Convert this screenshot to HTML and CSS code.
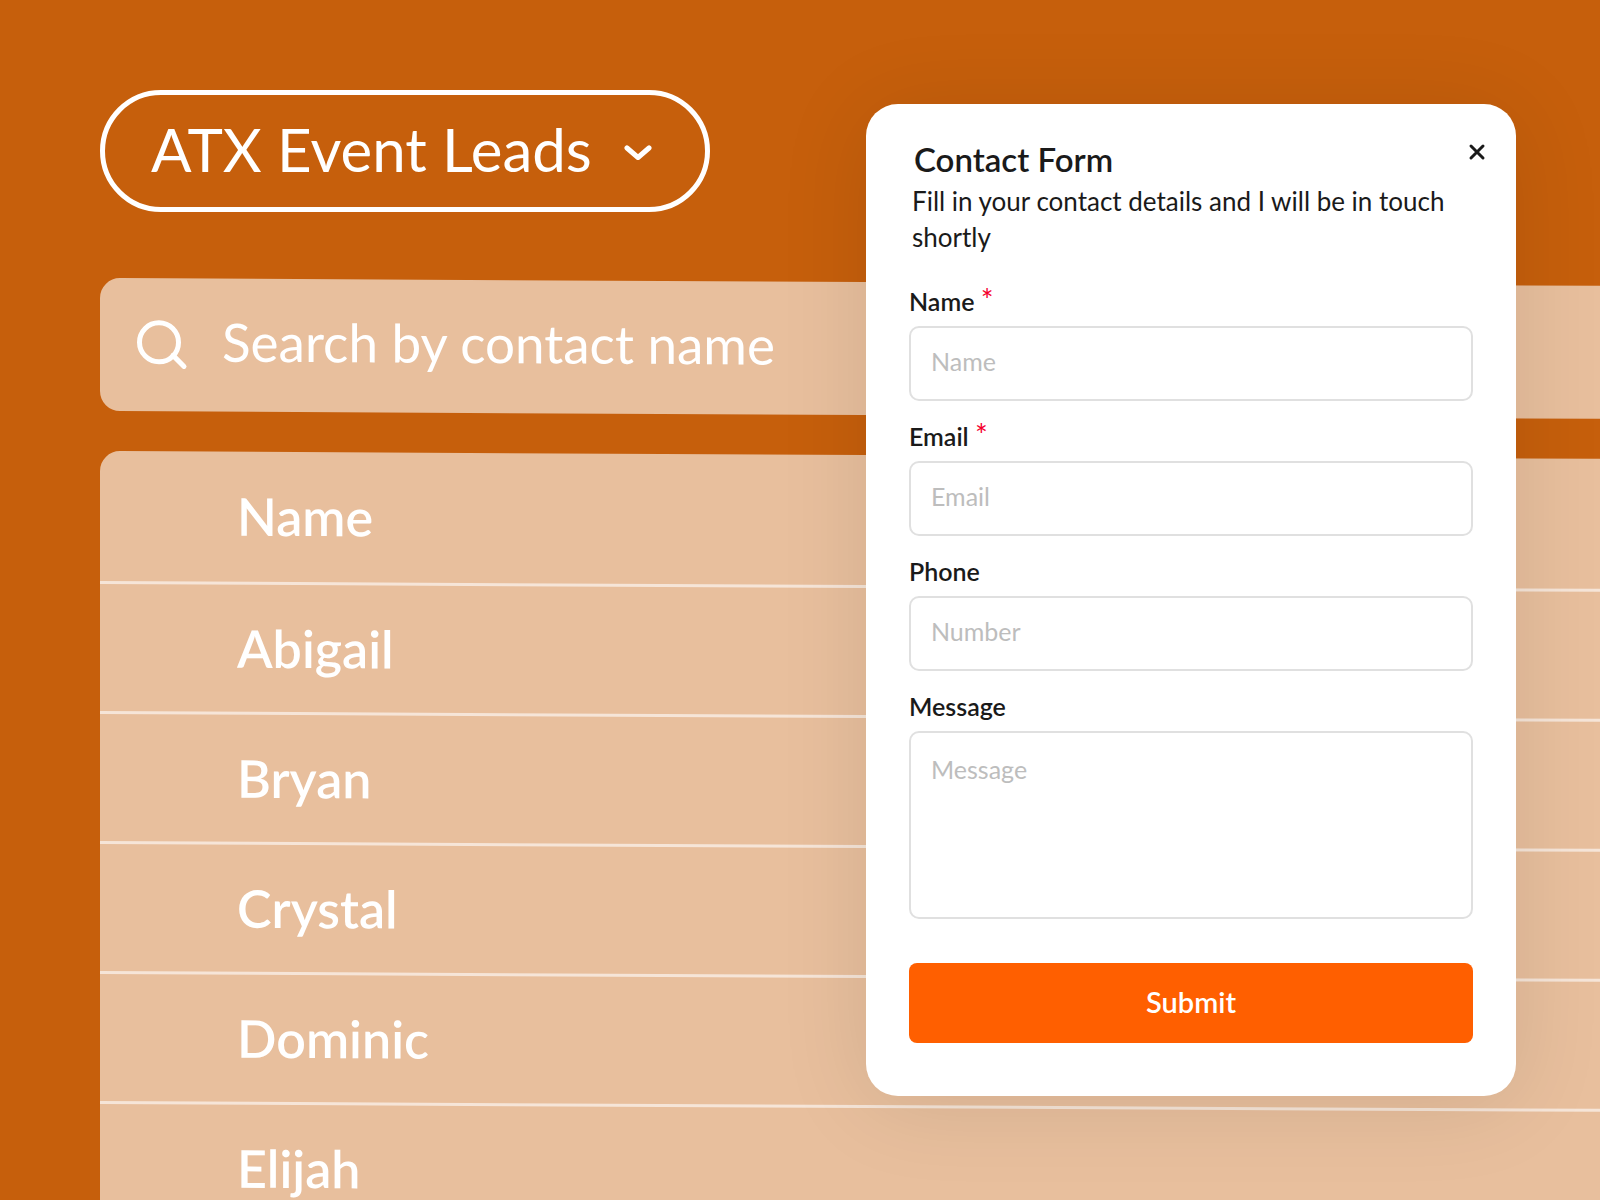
FILE: index.html
```html
<!DOCTYPE html>
<html lang="en">
<head>
  <meta charset="utf-8">
  <meta name="viewport" content="width=device-width, initial-scale=1">
  <title>ATX Event Leads</title>
  <link rel="stylesheet" href="styles.css">
</head>
<body>
  <main class="leads">
    <div class="picker">
      <select class="picker-select" aria-label="Lead list">
        <option>ATX Event Leads</option>
      </select>
      <svg class="picker-chevron" viewBox="0 0 28 16" aria-hidden="true"><path d="M3 3l11 9.500L25 3"/></svg>
    </div>

    <div class="board">
      <label class="search">
        <svg class="search-icon" viewBox="0 0 52 52" aria-hidden="true"><circle cx="23" cy="23" r="19.5"/><path d="M37 36l11 11"/></svg>
        <input class="search-input" type="search" placeholder="Search by contact name" aria-label="Search by contact name">
      </label>

      <table class="contacts">
        <thead>
          <tr><th scope="col">Name</th></tr>
        </thead>
        <tbody>
          <tr><td>Abigail</td></tr>
          <tr><td>Bryan</td></tr>
          <tr><td>Crystal</td></tr>
          <tr><td>Dominic</td></tr>
          <tr><td>Elijah</td></tr>
        </tbody>
      </table>
    </div>
  </main>

  <section class="dialog" role="dialog" aria-labelledby="dialog-title">
    <header class="dialog-head">
      <h1 class="dialog-title" id="dialog-title">Contact Form</h1>
      <button class="dialog-close" type="button" aria-label="Close">
        <svg viewBox="0 0 18 18" aria-hidden="true"><path d="M3 3l12 12M15 3L3 15"/></svg>
      </button>
    </header>
    <p class="dialog-text">Fill in your contact details and I will be in touch shortly</p>

    <form class="form">
      <div class="field">
        <label class="field-label" for="name">Name <span class="required">*</span></label>
        <input class="field-input" id="name" type="text" placeholder="Name">
      </div>
      <div class="field">
        <label class="field-label" for="email">Email <span class="required">*</span></label>
        <input class="field-input" id="email" type="email" placeholder="Email">
      </div>
      <div class="field">
        <label class="field-label" for="phone">Phone</label>
        <input class="field-input" id="phone" type="tel" placeholder="Number">
      </div>
      <div class="field">
        <label class="field-label" for="message">Message</label>
        <textarea class="field-input field-area" id="message" placeholder="Message"></textarea>
      </div>
      <button class="submit" type="submit">Submit</button>
    </form>
  </section>
</body>
</html>
```
FILE: styles.css
```css
* {
  box-sizing: border-box;
}

body {
  position: relative;
  margin: 0;
  height: 100vh;
  overflow: hidden;
  background: #c65f0c;
  color: #1a1a1a;
  font-family: Lato, "Liberation Sans", sans-serif;
}

svg {
  fill: none;
  stroke: currentColor;
  stroke-linecap: round;
  stroke-linejoin: round;
}

input,
select,
textarea,
button {
  margin: 0;
  font-family: inherit;
}

/* Lead list */
.leads {
  padding: 90px 0 0 100px;
  color: #fff;
}

.picker {
  display: inline-grid;
  align-items: center;
}

.picker-select,
.picker-chevron {
  grid-area: 1 / 1;
}

.picker-select {
  height: 122px;
  padding: 0 113px 4px 46px;
  border: 5px solid #fff;
  border-radius: 61px;
  appearance: none;
  background: none;
  color: inherit;
  font-size: 60px;
}

.picker-chevron {
  justify-self: end;
  width: 28px;
  height: 16px;
  margin: 4px 58px 0 0;
  stroke-width: 5;
  pointer-events: none;
}

.board {
  display: grid;
  gap: 40px;
  margin: 66px -20px 0 0;
  transform: skewY(0.3deg);
  transform-origin: 0 0;
}

.search {
  display: flex;
  align-items: center;
  gap: 34px;
  height: 133px;
  padding: 0 36px;
  border-radius: 20px;
  background: rgba(255, 255, 255, 0.6);
}

.search-icon {
  flex: none;
  width: 52px;
  height: 52px;
  stroke-width: 5;
}

.search-input {
  flex: 1;
  padding: 0 0 8px;
  border: 0;
  background: none;
  color: inherit;
  font-size: 53px;
}

.search-input::placeholder {
  color: #fff;
  opacity: 1;
}

.contacts {
  width: 100%;
  border-collapse: separate;
  border-spacing: 0;
  border-radius: 20px 20px 0 0;
  background: rgba(255, 255, 255, 0.6);
}

.contacts th,
.contacts td {
  height: 130px;
  padding: 0 0 2px 137px;
  border-bottom: 3px solid rgba(255, 255, 255, 0.6);
  font-size: 52px;
  font-weight: 600;
  text-align: left;
}

.contacts th {
  height: 133px;
}

/* Contact dialog */
.dialog {
  position: absolute;
  top: 104px;
  right: 84px;
  width: 650px;
  padding: 33px 43px 53px;
  border-radius: 32px;
  background: #fff;
  box-shadow: 0 8px 90px rgba(0, 0, 0, 0.1);
}

.dialog-head {
  display: flex;
  justify-content: space-between;
  align-items: flex-start;
  padding-left: 5px;
}

.dialog-title {
  margin: 0;
  font-size: 33px;
  font-weight: 600;
  line-height: 44px;
}

.dialog-close {
  display: grid;
  width: 18px;
  height: 18px;
  margin: 6px -13px 0 0;
  padding: 0;
  border: 0;
  background: none;
  color: inherit;
}

.dialog-close svg {
  width: 18px;
  height: 18px;
  stroke-width: 3;
}

.dialog-text {
  margin: 2px 0 0;
  padding: 0 20px 0 3px;
  font-size: 26px;
  line-height: 36px;
}

.form {
  display: grid;
  gap: 19px;
  margin-top: 29px;
}

.field {
  display: grid;
  gap: 10px;
}

.field-label {
  height: 31px;
  font-size: 25px;
  font-weight: 600;
  line-height: 32px;
}

.field-label[for="name"] {
  margin-top: 1px;
}

.required {
  color: #f5002d;
  font-size: 30px;
  font-weight: 400;
  line-height: 24px;
}

.field-input {
  width: 100%;
  height: 75px;
  padding: 0 20px 6px;
  border: 2px solid #e0e0e0;
  border-radius: 10px;
  background: #fff;
  color: inherit;
  font-size: 25px;
}

.field-input::placeholder {
  color: #bdbdbd;
  opacity: 1;
}

.field-area {
  display: block;
  height: 188px;
  padding-top: 20px;
  line-height: 32px;
  resize: none;
}

.submit {
  height: 80px;
  margin-top: 25px;
  padding: 0 0 3px;
  border: 0;
  border-radius: 8px;
  background: #ff5f00;
  color: #fff;
  font-size: 29px;
  font-weight: 600;
}
```
